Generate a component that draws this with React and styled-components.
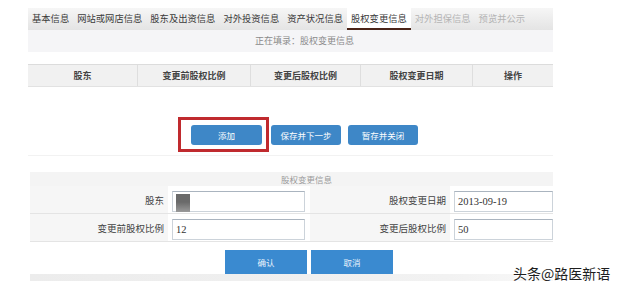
import React from "react";
import styled, { createGlobalStyle } from "styled-components";

const GlobalStyle = createGlobalStyle`
  body {
    margin: 0;
    background: #ffffff;
    font-family: "Noto Sans CJK SC", "Liberation Sans", sans-serif;
    color: #333333;
  }
`

const Page = styled.div`
  position: relative;
  width: 640px;
  height: 294px;
  overflow: hidden;
`

const Panel = styled.div`
  margin-left: 28px;
  padding-top: 8px;
  width: 525px;
`

const TabBar = styled.div`
  display: flex;
  height: 22px;
  padding-left: 0;
  background: linear-gradient(#f6f6f6, #e4e4e4);
`

const Tab = styled.div`
  display: flex;
  align-items: center;
  padding: 0 4px;
  font-size: 9.3px;
  white-space: nowrap;
  color: ${props => (props.disabled ? "#b4b4b4" : "#3a3a3a")};
  background: ${props => (props.active ? "#ffffff" : "transparent")};
  border-bottom: 2px solid ${props => (props.active ? "#4a2418" : "transparent")};
  box-sizing: border-box;
`

const Status = styled.div`
  height: 22px;
  line-height: 22px;
  padding-left: 28px;
  text-align: center;
  font-size: 9px;
  color: #8a8a8a;
  background: #f5f5f7;
`

const HeaderRow = styled.div`
  display: grid;
  grid-template-columns: 109px 113px 110px 112px 81px;
  margin-top: 12px;
  height: 23px;
  background: #f1f1f1;
  border-top: 1px solid #dcdcdc;
  border-bottom: 1px solid #e2e2e2;
  box-sizing: border-box;
`

const HeaderCell = styled.div`
  display: flex;
  align-items: center;
  justify-content: center;
  font-size: 9px;
  font-weight: 700;
  color: #444444;
  border-left: ${props => (props.first ? "none" : "1px solid #dedede")};
`

const ActionRow = styled.div`
  display: flex;
  gap: 7px;
  margin-top: 38px;
  padding: 0 0 10px 163px;
  border-bottom: 1px solid #f2f2f2;
`

const Highlight = styled.span`
  position: relative;
  display: inline-flex;
  margin-right: 2px;

  &::after {
    position: absolute;
    content: "";
    left: -13px;
    right: -7px;
    top: -8px;
    bottom: -7px;
    border: 3px solid #c02a2e;
  }
`

const RoundButton = styled.button`
  width: ${props => props.width || 70}px;
  height: 20px;
  padding: 0;
  border: none;
  border-radius: 3px;
  background: #3e87c7;
  color: #ffffff;
  font-family: inherit;
  font-size: 8.5px;
`

const Section = styled.div`
  margin-top: 16px;
  margin-left: 2px;
`

const SectionTitle = styled.div`
  height: 14px;
  line-height: 14px;
  padding-left: 30px;
  text-align: center;
  font-size: 8.5px;
  color: #9a9a9a;
  background: #f4f4f4;
`

const FormRow = styled.div`
  display: grid;
  grid-template-columns: 138px 142px 140px 103px;
  height: 28px;
  border-bottom: 1px solid #e4e4e4;
  box-sizing: border-box;
`

const Label = styled.div`
  display: flex;
  align-items: center;
  justify-content: flex-end;
  padding-right: 4px;
  font-size: 9.5px;
  color: #444444;
  background: #f6f6f6;
`

const FieldCell = styled.div`
  display: flex;
  align-items: flex-end;
  padding: 0 0 1px 4px;
`

const Field = styled.div`
  display: flex;
  align-items: center;
  width: ${props => props.width || 133}px;
  height: 21px;
  padding-left: 3px;
  box-sizing: border-box;
  border: 1px solid #ccd3da;
  border-top-color: #aab4bf;
  background: #ffffff;
  font-family: "Liberation Serif", serif;
  font-size: 10.5px;
  color: #333333;
`

const Redacted = styled.span`
  width: 14px;
  height: 18px;
  margin-top: 2px;
  background: linear-gradient(#6a6a6a 0 45%, #9a9a9a 100%);
  filter: blur(0.5px);
`

const FooterRow = styled.div`
  display: flex;
  gap: 4px;
  padding: 8px 0 0 195px;
`

const FlatButton = styled.button`
  width: 82px;
  height: 24px;
  padding: 0;
  border: none;
  background: #3a8ad0;
  color: #e8f2fb;
  font-family: inherit;
  font-size: 8.5px;
`

const FooterBar = styled.div`
  height: 7px;
  background: linear-gradient(90deg, #ececec, #f2f2f2 80%, #f8f8f8);
`

const Watermark = styled.div`
  position: absolute;
  left: 513px;
  top: 263px;
  font-size: 14px;
  color: #1e1e1e;
  text-shadow: 0 0 2px #ffffff, 1px 1px 0 #ffffff, -1px -1px 0 #ffffff;
`

const tabs = [
  { name: "基本信息" },
  { name: "网站或网店信息" },
  { name: "股东及出资信息" },
  { name: "对外投资信息" },
  { name: "资产状况信息" },
  { name: "股权变更信息", active: true },
  { name: "对外担保信息", disabled: true },
  { name: "预览并公示", disabled: true },
];

const columns = ["股东", "变更前股权比例", "变更后股权比例", "股权变更日期", "操作"];

export default function App() {
  return (
    <Page>
      <GlobalStyle />
      <Panel>
        <TabBar>
          {tabs.map(t => (
            <Tab key={t.name} active={t.active} disabled={t.disabled}>
              {t.name}
            </Tab>
          ))}
        </TabBar>
        <Status>正在填录：股权变更信息</Status>
        <HeaderRow>
          {columns.map((c, i) => (
            <HeaderCell key={c} first={i === 0}>{c}</HeaderCell>
          ))}
        </HeaderRow>
        <ActionRow>
          <Highlight>
            <RoundButton width={71}>添加</RoundButton>
          </Highlight>
          <RoundButton>保存并下一步</RoundButton>
          <RoundButton>暂存并关闭</RoundButton>
        </ActionRow>
        <Section>
          <SectionTitle>股权变更信息</SectionTitle>
          <FormRow>
            <Label>股东</Label>
            <FieldCell>
              <Field><Redacted /></Field>
            </FieldCell>
            <Label>股权变更日期</Label>
            <FieldCell>
              <Field width={110}>2013-09-19</Field>
            </FieldCell>
          </FormRow>
          <FormRow>
            <Label>变更前股权比例</Label>
            <FieldCell>
              <Field>12</Field>
            </FieldCell>
            <Label>变更后股权比例</Label>
            <FieldCell>
              <Field width={110}>50</Field>
            </FieldCell>
          </FormRow>
          <FooterRow>
            <FlatButton>确认</FlatButton>
            <FlatButton>取消</FlatButton>
          </FooterRow>
          <FooterBar />
        </Section>
      </Panel>
      <Watermark>头条@路医新语</Watermark>
    </Page>
  );
}
